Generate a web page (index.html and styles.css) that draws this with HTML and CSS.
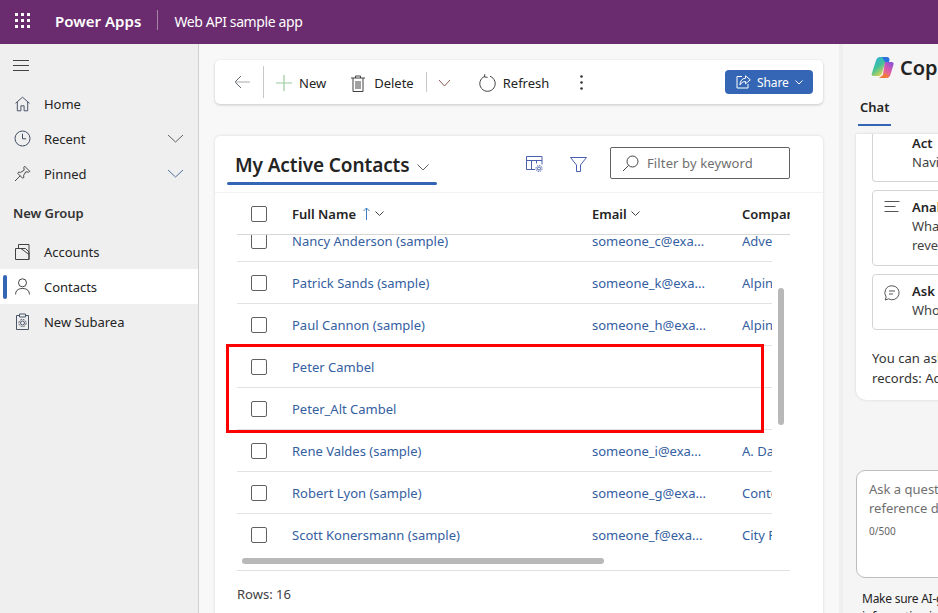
FILE: index.html
```html
<!DOCTYPE html>
<html lang="en">
<head>
<meta charset="utf-8">
<title>Web API sample app</title>
<link rel="stylesheet" href="styles.css">
</head>
<body>
<div class="app">
  <header class="topbar">
    <svg class="waffle" width="16" height="16" viewBox="0 0 16 16" fill="#fff"><rect x="0" y="0" width="3" height="3"/><rect x="6" y="0" width="3" height="3"/><rect x="12" y="0" width="3" height="3"/><rect x="0" y="6" width="3" height="3"/><rect x="6" y="6" width="3" height="3"/><rect x="12" y="6" width="3" height="3"/><rect x="0" y="12" width="3" height="3"/><rect x="6" y="12" width="3" height="3"/><rect x="12" y="12" width="3" height="3"/></svg>
    <span class="brand">Power Apps</span>
    <span class="topdiv"></span>
    <span class="appname">Web API sample app</span>
  </header>
  <div class="body">
    <nav class="sidebar">
      <div class="burger"><svg width="18" height="11" viewBox="0 0 18 11" stroke="#424242" stroke-width="1"><path d="M1 .5h16M1 5.500h16M1 10.500h16"/></svg></div>
      <div class="navitem"><svg class="navicon" width="16" height="16" viewBox="0 0 16 16" fill="none" stroke="#4a5568"><path d="M1 7.300 8 1.200l7 6.100M2.800 6v8.800h3.600v-5h3.200v5h3.600V6"/></svg><span>Home</span></div>
      <div class="navitem"><svg class="navicon" width="17" height="17" viewBox="0 0 17 17" fill="none" stroke="#3f4d63"><circle cx="8.500" cy="8.500" r="7.500"/><path d="M8.500 3.800v5h3.600"/></svg><span>Recent</span><svg class="navchev" width="17" height="9" viewBox="0 0 17 9" fill="none" stroke="#616161"><path d="m1 1 7.500 7L16 1"/></svg></div>
      <div class="navitem"><svg class="navicon" width="17" height="17" viewBox="0 0 17 17" fill="none" stroke="#4a4a4a"><path d="M10.600 1.200 15.800 6.400 14.600 7.200 11.800 6.800 9.600 10.400 9.900 12.400 8.600 13.200 3.800 8.400 4.600 7.100 6.600 7.400 10.200 5.200 9.800 2.400ZM6.200 10.800 1 16"/></svg><span>Pinned</span><svg class="navchev" width="17" height="9" viewBox="0 0 17 9" fill="none" stroke="#4f6f9a"><path d="m1 1 7.500 7L16 1"/></svg></div>
      <div class="navgroup">New Group</div>
      <div class="navitem"><svg class="navicon" width="15" height="16" viewBox="0 0 15 16" fill="none" stroke="#424242"><path d="M.5 15.500V4.500h10l3.500 3.500v7.500ZM3.500 4.500V.5h10.500v15M6 4.500 14 10.500"/></svg><span>Accounts</span></div>
      <div class="navitem active"><span class="marker"></span><svg class="navicon" width="15" height="17" viewBox="0 0 15 17" fill="none" stroke="#424242"><circle cx="7.500" cy="4.800" r="4"/><path d="M.6 16.500c0-3.500 2-6 6.900-6s6.900 2.500 6.900 6"/></svg><span>Contacts</span></div>
      <div class="navitem"><svg class="navicon" width="15" height="17" viewBox="0 0 15 17" fill="none" stroke="#4a5568"><path d="M4.500 2.500h-3v14h12v-14h-3M4.500 1h6v3h-6Z"/><circle cx="7.500" cy="10" r="2"/><circle cx="7.500" cy="10" r="3.600" stroke-dasharray="1.800 1"/></svg><span>New Subarea</span></div>
    </nav>
    <main class="main">
      <div class="cmdbar">
        <svg class="cmd-back" width="16" height="14" viewBox="0 0 16 14" fill="none"><path d="M7 1 1 7l6 6" stroke="#5f6670"/><path d="M1 7h15" stroke="#a8a8a8"/></svg>
        <span class="cmddiv tall"></span>
        <button class="cmdbtn first"><svg width="16" height="16" viewBox="0 0 16 16" stroke="#9ccb9f" stroke-width="1.200"><path d="M8 0v16M0 8h16"/></svg>New</button>
        <button class="cmdbtn second"><svg width="14" height="17" viewBox="0 0 14 17" fill="none" stroke="#424242"><path d="M0 3h14M4.500 3V1h5v2M2 3v13.500h10V3M5 6v8M7 6v8M9 6v8"/></svg>Delete</button>
        <span class="cmddiv"></span>
        <svg class="cmd-chev" width="13" height="8" viewBox="0 0 13 8" fill="none" stroke="#8a5a50"><path d="m1 1 5.500 6L12 1"/></svg>
        <button class="cmdbtn refresh"><svg width="17" height="18" viewBox="0 0 17 18" fill="none" stroke="#424242"><path d="M5.500 2.500a7.700 7.700 0 1 0 5.500-.2M5.800.2l-.3 2.800 3 .3"/></svg>Refresh</button>
        <svg class="cmd-more" width="3" height="15" viewBox="0 0 3 15" fill="#333"><circle cx="1.500" cy="1.500" r="1.300"/><circle cx="1.500" cy="7.500" r="1.300"/><circle cx="1.500" cy="13.500" r="1.300"/></svg>
        <button class="share"><svg width="15" height="14" viewBox="0 0 15 14" fill="none" stroke="#fff"><path d="M6 1.500H1v11.500h11V9"/><path d="M9.500.8 14.300 4.800 9.500 8.800V6.500C6.500 6.500 5 8 4 10c0-4 2-6.500 5.500-6.800Z"/></svg><span>Share</span><svg width="8" height="5" viewBox="0 0 8 5" fill="none" stroke="#fff"><path d="m.5.500 3.500 3.500L7.500.5"/></svg></button>
      </div>
      <section class="card">
        <div class="viewhead">
          <h1 class="viewtitle">My Active Contacts<svg width="12" height="7" viewBox="0 0 12 7" fill="none" stroke="#616161"><path d="m.5.500 5.500 5.500L11.500.5"/></svg></h1>
          <svg class="ico-cols" width="17" height="16" viewBox="0 0 17 16" fill="none" stroke="#4a5fb0"><path d="M9 13.500H.5V.5h15.500v8M.5 4.500h15.500M5.500 4.500v9M10.500 4.500v3"/><circle cx="13" cy="12.500" r="1.500"/><circle cx="13" cy="12.500" r="3" stroke-dasharray="1.400 .9"/></svg>
          <svg class="ico-filter" width="17" height="15" viewBox="0 0 17 15" fill="none" stroke="#4a5fb0"><path d="M.5.500h16L10.500 8v6.500h-4V8Z"/></svg>
          <div class="search"><svg width="17" height="17" viewBox="0 0 17 17" fill="none" stroke="#424242"><circle cx="10.500" cy="6.500" r="5.500"/><path d="M6.500 10.500 1 16"/></svg><span>Filter by keyword</span></div>
        </div>
        <div class="grid">
          <div class="gridhead">
            <div class="cell-check"><span class="check"></span></div>
            <div class="th">Full Name<svg class="sortup" width="7" height="13" viewBox="0 0 7 13" fill="none" stroke="#3f7cc4"><path d="M3.500 13V1M.5 4l3-3 3 3"/></svg><svg width="9" height="5" viewBox="0 0 9 5" fill="none" stroke="#424242"><path d="m.5.500 4 4 4-4"/></svg></div>
            <div class="th email">Email<svg width="9" height="5" viewBox="0 0 9 5" fill="none" stroke="#424242"><path d="m.5.500 4 4 4-4"/></svg></div>
            <div class="th clip">Company</div>
          </div>
          <div class="rows">
            <div class="rowlist">
              <div class="row"><div class="cell-check"><span class="check"></span></div><a class="td">Nancy Anderson (sample)</a><a class="td">someone_c@exa...</a><a class="td clip">Adventure Works</a></div>
              <div class="row"><div class="cell-check"><span class="check"></span></div><a class="td">Patrick Sands (sample)</a><a class="td">someone_k@exa...</a><a class="td clip">Alpine Ski House</a></div>
              <div class="row"><div class="cell-check"><span class="check"></span></div><a class="td">Paul Cannon (sample)</a><a class="td">someone_h@exa...</a><a class="td clip">Alpine Ski House</a></div>
              <div class="row"><div class="cell-check"><span class="check"></span></div><a class="td">Peter Cambel</a><a class="td"></a><a class="td clip"></a></div>
              <div class="row"><div class="cell-check"><span class="check"></span></div><a class="td">Peter_Alt Cambel</a><a class="td"></a><a class="td clip"></a></div>
              <div class="row"><div class="cell-check"><span class="check"></span></div><a class="td">Rene Valdes (sample)</a><a class="td">someone_i@exa...</a><a class="td clip">A. Datum Corp</a></div>
              <div class="row"><div class="cell-check"><span class="check"></span></div><a class="td">Robert Lyon (sample)</a><a class="td">someone_g@exa...</a><a class="td clip">Contoso Pharma</a></div>
              <div class="row"><div class="cell-check"><span class="check"></span></div><a class="td">Scott Konersmann (sample)</a><a class="td">someone_f@exa...</a><a class="td clip">City Power</a></div>
            </div>
            <span class="vscroll"></span>
            <span class="redbox"></span>
          </div>
          <div class="hscrolltrack"><span class="hscroll"></span></div>
          <div class="gridfoot">Rows: 16</div>
        </div>
      </section>
    </main>
    <aside class="copilot">
      <div class="cop-head">
        <svg width="23" height="23" viewBox="0 0 23 23"><defs><linearGradient id="cg1" x1="0" y1="0" x2="0.6" y2="1"><stop offset="0" stop-color="#2fa8e8"/><stop offset=".55" stop-color="#3fc39a"/><stop offset="1" stop-color="#e8d24a"/></linearGradient><linearGradient id="cg2" x1="1" y1="0" x2="0.3" y2="1"><stop offset="0" stop-color="#7a4fe0"/><stop offset=".55" stop-color="#e05aa8"/><stop offset="1" stop-color="#f08a3c"/></linearGradient></defs><path d="M9 1h7l-5 16c-.6 2-1.800 3-3.500 3H2.500C1 20 .3 19 .8 17.500L5 4.500C5.700 2.200 7 1 9 1Z" fill="url(#cg1)"/><path d="M14 6h6.500C22 6 23 7 22.500 8.500l-3 10C18.800 21 17.500 22 15.500 22H8l3.500-.5 2-13Z" fill="url(#cg2)"/><path d="M11 1h5c1.500 0 2.500 1 2.500 2.500L18 6h-4Z" fill="#2b6fe0"/><path d="M8 22h6.500c1.500 0 2.600-.8 3.200-2.200L15 18l-3 1Z" fill="#ef7a3a"/></svg>
        <span class="cop-title">Copilot</span>
      </div>
      <div class="cop-tabs"><span class="cop-tab">Chat</span></div>
      <div class="cop-msg">
        <div class="tile first">
          <span class="tile-ico"></span>
          <div class="tile-text"><b>Act</b><span>Navigate to records</span></div>
        </div>
        <div class="tile analyze">
          <svg class="tile-ico" width="17" height="11" viewBox="0 0 17 11" stroke="#555"><path d="M1 .5h15M1 5.500h11M1 10.500h14"/></svg>
          <div class="tile-text"><b>Analyze</b><span>What are the trends</span><span>revealed in my data</span></div>
        </div>
        <div class="tile ask">
          <svg class="tile-ico" width="16" height="16" viewBox="0 0 16 16" fill="none" stroke="#555"><path d="M8 .8a7 7 0 1 1-3.500 13L1.200 15l1-3A7 7 0 0 1 8 .8ZM5 6h6M5 9h4"/></svg>
          <div class="tile-text"><b>Ask</b><span>Who is my contact</span></div>
        </div>
        <p class="cop-note">You can ask about these<br>records: Accounts, Contacts</p>
      </div>
      <div class="cop-input">
        <div class="cop-ph">Ask a question or<br>reference data</div>
        <div class="cop-count">0/500</div>
      </div>
      <p class="cop-foot">Make sure AI-generated content<br>information is accurate</p>
    </aside>
  </div>
</div>
</body>
</html>
```
FILE: styles.css
```css
* { box-sizing: border-box; }
html, body { margin: 0; height: 100%; overflow: hidden; }
body { font-family: "Noto Sans", "Open Sans", sans-serif; font-size: 13px; color: #242424; }
svg { flex: none; display: block; }
button { font: inherit; border: 0; background: none; color: inherit; padding: 0; display: flex; align-items: center; }

.app { width: 938px; height: 613px; display: flex; flex-direction: column; overflow: hidden; }

.topbar { height: 44px; flex: none; background: #6b2c6f; color: #fff; display: flex; align-items: center; padding-left: 15px; }
.waffle { margin-top: -2px; }
.brand { margin: -3px 0 0 24px; font-size: 15px; font-weight: 600; letter-spacing: .03px; }
.topdiv { width: 1px; height: 20px; background: #a585a8; margin: -4px 16px 0 16px; }
.appname { margin-top: -2px; font-size: 14px; letter-spacing: -.4px; }

.body { flex: 1; display: flex; min-height: 0; }

.sidebar { width: 199px; flex: none; background: #efefef; border-right: 1px solid #cfcfcf; }
.burger { height: 42px; padding: 16px 0 0 12px; }
.navitem { position: relative; height: 35px; display: flex; align-items: center; padding: 0 14px 0 14px; font-size: 13px; letter-spacing: -.03px; }
.navicon { margin-right: 13px; width: 17px; }
.navitem span:not(.marker) { flex: 1; }
.navgroup { height: 43px; padding-left: 13px; display: flex; align-items: center; font-size: 13px; font-weight: 600; letter-spacing: -.05px; color: #333; }
.active { background: #fff; }
.marker { position: absolute; left: 3px; top: 6px; width: 4px; height: 24px; background: #3566b5; border-radius: 2px; }

.main { width: 644px; flex: none; background: #f8f8f8; padding: 16px 16px 0 16px; border-right: 4px solid #efefef; }

.cmdbar { height: 44px; background: #fff; border-radius: 5px; box-shadow: 0 1px 3px rgba(0,0,0,.2); display: flex; align-items: center; padding-left: 19px; font-size: 13px; }
.cmd-back { margin-right: 13px; }
.cmddiv { width: 1px; height: 20px; background: #c8c8c8; }
.cmddiv.tall { height: 32px; }
.cmdbtn { gap: 7px; color: #242424; padding-top: 2px; }
.cmdbtn.first { margin-left: 12px; margin-right: 25px; }
.cmdbtn.second { gap: 9px; margin-right: 12px; }
.cmd-chev { margin: 2px 0 0 11px; }
.cmdbtn.refresh { margin-left: 28px; margin-right: 31px; gap: 7px; }
.share { margin-left: auto; margin-right: 10px; width: 88px; height: 24px; background: #3566b5; border-radius: 4px; color: #fff; font-size: 12px; letter-spacing: -.1px; gap: 6px; padding-left: 11px; }

.card { margin-top: 32px; height: 490px; background: #fff; border-radius: 5px 5px 0 0; box-shadow: 0 0 3px rgba(0,0,0,.14); }
.viewhead { height: 57px; display: flex; align-items: center; position: relative; border-bottom: 1px solid #f3f3f3; padding: 0 33px 0 20px; }
.viewtitle { margin: 0; font-size: 19px; font-weight: 600; letter-spacing: -.1px; display: flex; align-items: center; gap: 8px; height: 48px; position: relative; top: 1px; }
.viewtitle::after { content: ""; position: absolute; left: -8px; right: -8px; bottom: 4px; height: 3px; border-radius: 2px; background: #3566b5; }
.viewtitle svg { margin: 4px 0 0 0; }
.ico-cols { margin-left: auto; }
.ico-filter { margin: 0 23px 0 27px; }
.search { width: 180px; height: 32px; margin-bottom: 2px; border: 1px solid #616161; border-radius: 2px; display: flex; align-items: center; gap: 8px; padding-left: 11px; color: #6f6f6f; font-size: 13px; letter-spacing: .12px; }

.grid { padding-left: 22px; position: relative; }
.gridhead { height: 42px; width: 553px; display: grid; grid-template-columns: 55px 300px 150px 48px; align-items: center; border-bottom: 1px solid #d6d6d6; }
.cell-check { padding-left: 14px; }
.check { display: block; width: 16px; height: 16px; border: 1px solid #616161; border-radius: 2px; background: #fff; }
.th { font-size: 13px; font-weight: 600; display: flex; align-items: center; gap: 5px; white-space: nowrap; }
.th.email { gap: 4px; }
.sortup { margin-left: 2px; }
.clip { overflow: hidden; white-space: nowrap; }
.rows { position: relative; height: 321px; width: 553px; }
.rowlist { height: 321px; width: 535px; overflow: hidden; }
.row { height: 42px; display: grid; grid-template-columns: 55px 300px 150px 30px; align-items: center; border-bottom: 1px solid #e2e2e2; }
.row:first-child { margin-top: -15px; }
.row:last-child { border-bottom: 0; }
.td { color: #34609f; font-size: 13px; white-space: nowrap; }
.vscroll { position: absolute; left: 541px; top: 53px; width: 6px; height: 137px; background: #b8b8b8; border-radius: 3px; }
.redbox { position: absolute; left: -11px; top: 109px; width: 538px; height: 89px; border: 3px solid #f00; pointer-events: none; }
.hscrolltrack { width: 553px; height: 15px; padding: 2px 0 0 5px; border-bottom: 1px solid #e0e0e0; }
.hscroll { display: block; width: 362px; height: 6px; background: #b8b8b8; border-radius: 3px; }
.gridfoot { padding-top: 14px; font-size: 13px; color: #424242; }

.copilot { flex: 1; min-width: 0; overflow: hidden; background: #f5f5f5; }
.cop-head { display: flex; align-items: center; gap: 6px; height: 46px; padding: 0 0 0 28px; width: 300px; }
.cop-title { font-size: 20px; font-weight: 600; }
.cop-tabs { width: 300px; height: 44px; padding-left: 15px; }
.cop-tab { display: inline-block; height: 36px; padding: 8px 2px 0; font-size: 13px; font-weight: 600; border-bottom: 2px solid #3566b5; width: 33px; }
.cop-msg { width: 300px; height: 266px; margin-left: 13px; background: #fff; border-radius: 0 0 0 10px; box-shadow: 0 0 3px rgba(0,0,0,.14); padding: 0 0 0 16px; overflow: hidden; }
.tile { width: 280px; border: 1px solid #d4d4d4; border-radius: 4px; display: flex; padding: 7px 0 0 10px; font-size: 13px; line-height: 19px; margin-bottom: 8px; }
.tile.first { height: 48px; border-top: 0; border-radius: 0 0 4px 4px; padding-top: 0; }
.tile.analyze { height: 76px; }
.tile.ask { height: 56px; }
.tile-ico { width: 18px; margin: 3px 11px 0 0; }
.tile.first .tile-ico { height: 1px; }
.tile-text { white-space: nowrap; display: flex; flex-direction: column; color: #424242; }
.tile-text b { font-weight: 600; color: #242424; }
.cop-note { margin: 18px 0 0; font-size: 13px; line-height: 20px; white-space: nowrap; letter-spacing: .05px; color: #333; }
.cop-input { width: 300px; height: 108px; margin: 70px 0 0 13px; background: #fff; border: 1px solid #bdbdbd; border-radius: 9px; padding: 9px 0 0 12px; }
.cop-ph { font-size: 13px; line-height: 19px; color: #6f6f6f; white-space: nowrap; }
.cop-count { font-size: 10px; color: #666; margin-top: 6px; }
.cop-foot { margin: 12px 0 0 19px; width: 300px; font-size: 12px; line-height: 18px; letter-spacing: -.25px; white-space: nowrap; }
```
